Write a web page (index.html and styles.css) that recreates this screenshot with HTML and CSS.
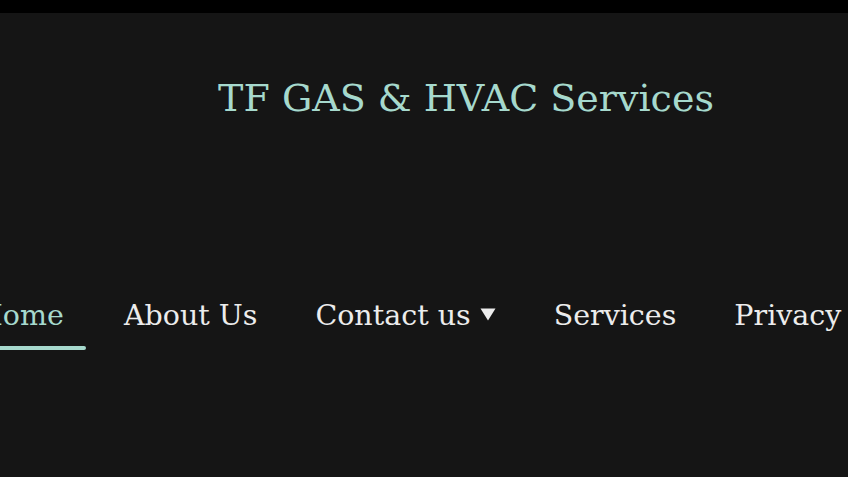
FILE: index.html
```html
<!DOCTYPE html>
<html>
<head>
<meta charset="utf-8">
<link rel="stylesheet" href="styles.css">
</head>
<body>
<div class="topbar"></div>
<header class="header">
  <h1 class="title">TF GAS &amp; HVAC Services</h1>
</header>
<nav class="nav">
  <ul class="menu">
    <li class="item active"><a>Home</a></li>
    <li class="item"><a>About Us</a></li>
    <li class="item"><a class="dropdown">Contact us<svg class="caret" width="16" height="13" viewBox="0 0 16 13"><path d="M0.5 0.5 H15.5 L8 12.5 Z" fill="#ececec"/></svg></a></li>
    <li class="item"><a>Services</a></li>
    <li class="item"><a>Privacy Policy</a></li>
  </ul>
</nav>
</body>
</html>
```
FILE: styles.css
```css
html, body {
  margin: 0;
  padding: 0;
  background: #151515;
  width: 848px;
  height: 477px;
  overflow: hidden;
  font-family: "DejaVu Serif", serif;
}
.topbar {
  height: 13px;
  background: #000;
}
.header {
  display: flex;
  justify-content: center;
  padding-left: 84px;
  padding-top: 60px;
  height: 163px;
  box-sizing: border-box;
}
.title {
  margin: 0;
  font-weight: normal;
  font-size: 38px;
  line-height: 50px;
  color: #a6d9cd;
}
.nav {
  overflow: hidden;
  padding-top: 120px;
}
.menu {
  list-style: none;
  margin: 0 0 0 -42px;
  padding: 0;
  display: flex;
  white-space: nowrap;
}
.item {
  padding: 0 20px 14px;
  margin-right: 18px;
  font-size: 28.5px;
  line-height: 40px;
  color: #ececec;
  position: relative;
}
.item.active {
  color: #a6d9cd;
  padding-right: 22px;
}
.item.active::after {
  content: "";
  position: absolute;
  left: 0;
  right: 0;
  bottom: 0;
  height: 4px;
  border-radius: 2px;
  background: #a6d9cd;
}
.dropdown {
  display: inline-flex;
  align-items: center;
  gap: 9px;
}
.caret {
  display: block;
  margin-top: -4px;
}
```
